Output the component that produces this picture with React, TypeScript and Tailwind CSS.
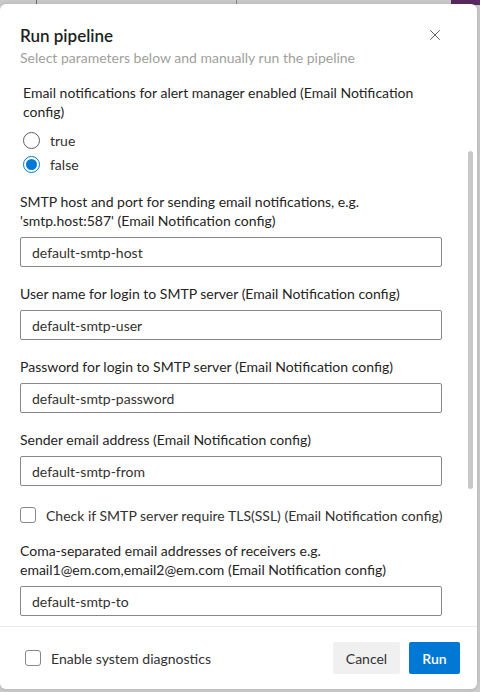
import type { ReactNode } from "react";
import { X } from "lucide-react";

const fieldLabel = "text-[14px] leading-[19px] text-[#252423]";

function TextField({ label, value }: { label: ReactNode; value: string }) {
  return (
    <div className="flex flex-col">
      <label className={fieldLabel}>{label}</label>
      <div className="mt-[7px] h-[30px] w-[422px] rounded-[2px] border border-[#8a8886] flex items-center px-[11px] text-[14px] text-[#323130]">
        {value}
      </div>
    </div>
  );
}

function Radio({ label, checked }: { label: string; checked?: boolean }) {
  return (
    <div className="flex items-center h-[24px] gap-[10px]">
      {checked ? (
        <span className="w-[17px] h-[17px] rounded-full border border-[#0078d4] flex items-center justify-center">
          <span className="w-[11px] h-[11px] rounded-full bg-[#0078d4]" />
        </span>
      ) : (
        <span className="w-[17px] h-[17px] rounded-full border border-[#605e5c]" />
      )}
      <span className="text-[14px] text-[#323130]">{label}</span>
    </div>
  );
}

function Checkbox({ label }: { label: string }) {
  return (
    <div className="flex items-center h-[20px] gap-[10px]">
      <span className="w-[16px] h-[16px] rounded-[3px] border border-[#8a8886]" />
      <span className="text-[14px] text-[#323130]">{label}</span>
    </div>
  );
}

export default function App() {
  return (
    <div
      className="relative w-[480px] h-[692px] overflow-hidden bg-[#cdcdcd]"
      style={{ fontFamily: 'Lato, "Noto Sans", sans-serif' }}
    >
      {/* page behind the overlay */}
      <div className="absolute left-[36px] top-0 w-[1px] h-[5px] bg-[#6b6b6b]" />
      <div className="absolute left-[236px] top-0 w-[1px] h-[5px] bg-[#8a8a8a]" />
      <div className="absolute left-[451px] top-0 w-[29px] h-[5px] bg-[#5a2a63]" />

      <div className="absolute left-0 top-[4px] w-[477px] h-[685px] bg-white rounded-[6px] shadow-[0_0_6px_rgba(0,0,0,0.15)] flex flex-col">
        {/* header */}
        <div className="flex items-start justify-between pl-[20px] pr-[33px] pt-[20px]">
          <div className="flex flex-col">
            <h1 className="text-[17px] leading-[24px] font-semibold text-[#201f1e]">Run pipeline</h1>
            <p className="mt-[1px] text-[14px] leading-[18px] text-[#a19f9d]">
              Select parameters below and manually run the pipeline
            </p>
          </div>
          <X className="mt-[2px] w-[18px] h-[18px] text-[#605e5c]" strokeWidth={1.3} />
        </div>

        {/* scrolling body */}
        <div className="relative flex-1 flex flex-col pl-[20px] pt-[16px]">
          <div className="flex flex-col pl-[3px]">
            <span className={`${fieldLabel} w-[420px]`}>
              Email notifications for alert manager enabled (Email Notification config)
            </span>
            <div className="mt-[7px] flex flex-col">
              <Radio label="true" />
              <Radio label="false" checked />
            </div>
          </div>

          <div className="mt-[16px] flex flex-col gap-[17px]">
            <TextField
              label={
                <>
                  SMTP host and port for sending email notifications, e.g.
                  <br />
                  'smtp.host:587' (Email Notification config)
                </>
              }
              value="default-smtp-host"
            />
            <TextField
              label="User name for login to SMTP server (Email Notification config)"
              value="default-smtp-user"
            />
            <TextField
              label="Password for login to SMTP server (Email Notification config)"
              value="default-smtp-password"
            />
            <TextField
              label="Sender email address (Email Notification config)"
              value="default-smtp-from"
            />
          </div>

          <div className="mt-[19px]">
            <Checkbox label="Check if SMTP server require TLS(SSL) (Email Notification config)" />
          </div>

          <div className="mt-[16px]">
            <TextField
              label={
                <>
                  Coma-separated email addresses of receivers e.g.
                  <br />
                  email1@em.com,email2@em.com (Email Notification config)
                </>
              }
              value="default-smtp-to"
            />
          </div>

          <div className="absolute right-[4px] top-[84px] w-[5px] h-[338px] rounded-full bg-[#c8c8c8]" />
        </div>

        {/* footer */}
        <div className="h-[63px] border-t border-[#edebe9] flex items-center justify-between pl-[25px] pr-[17px]">
          <Checkbox label="Enable system diagnostics" />
          <div className="flex items-center gap-[9px]">
            <button className="h-[32px] w-[67px] rounded-[2px] bg-[#f0f0f0] text-[14px] text-[#323130]">
              Cancel
            </button>
            <button className="h-[32px] w-[51px] rounded-[2px] bg-[#0078d4] text-[14px] font-semibold text-white">
              Run
            </button>
          </div>
        </div>
      </div>
    </div>
  );
}
